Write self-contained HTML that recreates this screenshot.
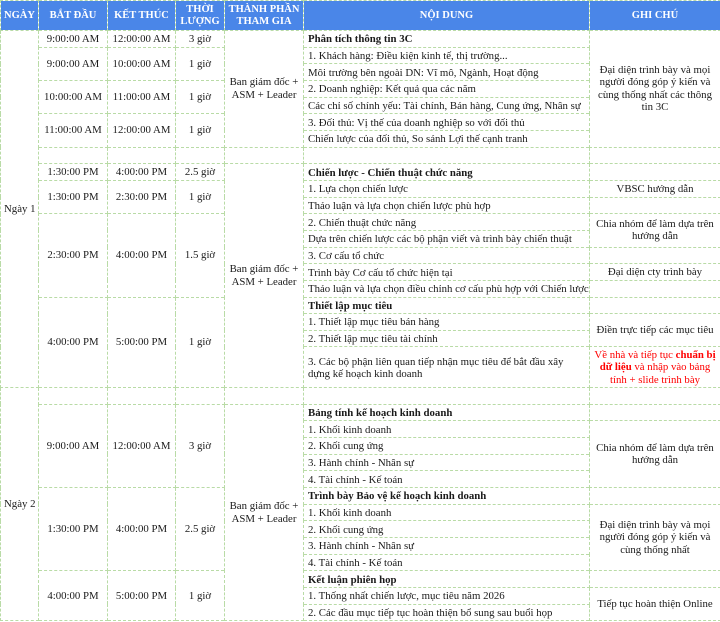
<!DOCTYPE html>
<html><head><meta charset="utf-8"><style>
html,body{margin:0;padding:0;background:#fff;overflow:hidden;}
table{border-collapse:collapse;table-layout:fixed;width:720px;font-family:"Liberation Serif","DejaVu Serif",serif;font-size:10.8px;color:#1a1a1a;}
td,th{border:1px dashed #b9dba6;padding:0 3px;overflow:hidden;white-space:nowrap;text-align:center;vertical-align:middle;line-height:12px;}
th{background:#4a86e8;color:#fff;font-weight:bold;font-size:10.5px;height:29px;line-height:12px;padding:0 1px;}
tr{height:16.67px;}
td.c{text-align:left;padding-left:4px;padding-top:1px;}
td.n{white-space:normal;line-height:12.5px;padding:0 5px;}
td.w{white-space:normal;line-height:13px;}
b{font-weight:bold;}
.red{color:#ff0000;}
</style></head><body>
<table>
<colgroup><col style="width:38px"><col style="width:69px"><col style="width:68px"><col style="width:49px"><col style="width:79px"><col style="width:286px"><col style="width:131px"></colgroup>
<tr style="height:30px"><th>NGÀY</th><th>BẮT ĐẦU</th><th>KẾT THÚC</th><th>THỜI<br>LƯỢNG</th><th>THÀNH PHẦN<br>THAM GIA</th><th>NỘI DUNG</th><th>GHI CHÚ</th></tr>
<tr><td rowspan="20">Ngày 1</td><td>9:00:00 AM</td><td>12:00:00 AM</td><td>3 giờ</td><td rowspan="7" class="w">Ban giám đốc + ASM + Leader</td><td class="c"><b>Phân tích thông tin 3C</b></td><td rowspan="7" class="n">Đại diện trình bày và mọi người đóng góp ý kiến và cùng thống nhất các thông tin 3C</td></tr>
<tr><td rowspan="2">9:00:00 AM</td><td rowspan="2">10:00:00 AM</td><td rowspan="2">1 giờ</td><td class="c">1. Khách hàng: Điều kiện kinh tế, thị trường...</td></tr>
<tr><td class="c">Môi trường bên ngoài DN: Vĩ mô, Ngành, Hoạt động</td></tr>
<tr><td rowspan="2">10:00:00 AM</td><td rowspan="2">11:00:00 AM</td><td rowspan="2">1 giờ</td><td class="c">2. Doanh nghiệp: Kết quả qua các năm</td></tr>
<tr><td class="c">Các chỉ số chính yếu: Tài chính, Bán hàng, Cung ứng, Nhân sự</td></tr>
<tr><td rowspan="2">11:00:00 AM</td><td rowspan="2">12:00:00 AM</td><td rowspan="2">1 giờ</td><td class="c">3. Đối thủ: Vị thế của doanh nghiệp so với đối thủ</td></tr>
<tr><td class="c">Chiến lược của đối thủ, So sánh Lợi thế cạnh tranh</td></tr>
<tr><td></td><td></td><td></td><td></td><td></td><td></td></tr>
<tr><td>1:30:00 PM</td><td>4:00:00 PM</td><td>2.5 giờ</td><td rowspan="12" class="w">Ban giám đốc + ASM + Leader</td><td class="c"><b>Chiến lược - Chiến thuật chức năng</b></td><td></td></tr>
<tr><td rowspan="2">1:30:00 PM</td><td rowspan="2">2:30:00 PM</td><td rowspan="2">1 giờ</td><td class="c">1. Lựa chọn chiến lược</td><td>VBSC hướng dẫn</td></tr>
<tr><td class="c">Thảo luận và lựa chọn chiến lược phù hợp</td><td></td></tr>
<tr><td rowspan="5">2:30:00 PM</td><td rowspan="5">4:00:00 PM</td><td rowspan="5">1.5 giờ</td><td class="c">2. Chiến thuật chức năng</td><td rowspan="2" class="n">Chia nhóm để làm dựa trên hướng dẫn</td></tr>
<tr><td class="c">Dựa trên chiến lược các bộ phận viết và trình bày chiến thuật</td></tr>
<tr><td class="c">3. Cơ cấu tổ chức</td><td></td></tr>
<tr><td class="c">Trình bày Cơ cấu tổ chức hiện tại</td><td>Đại diện cty trình bày</td></tr>
<tr><td class="c">Thảo luận và lựa chọn điều chỉnh cơ cấu phù hợp với Chiến lược</td><td></td></tr>
<tr><td rowspan="4">4:00:00 PM</td><td rowspan="4">5:00:00 PM</td><td rowspan="4">1 giờ</td><td class="c"><b>Thiết lập mục tiêu</b></td><td></td></tr>
<tr><td class="c">1. Thiết lập mục tiêu bán hàng</td><td rowspan="2">Điền trực tiếp các mục tiêu</td></tr>
<tr><td class="c">2. Thiết lập mục tiêu tài chính</td></tr>
<tr style="height:40.67px"><td class="c" style="white-space:normal">3. Các bộ phận liên quan tiếp nhận mục tiêu để bắt đầu xây dựng kế hoạch kinh doanh</td><td class="n red" style="padding:0 2px">Về nhà và tiếp tục <b>chuẩn bị dữ liệu</b> và nhập vào bảng tính + slide trình bày</td></tr>
<tr><td rowspan="14">Ngày 2</td><td></td><td></td><td></td><td></td><td></td><td></td></tr>
<tr><td rowspan="5">9:00:00 AM</td><td rowspan="5">12:00:00 AM</td><td rowspan="5">3 giờ</td><td rowspan="13" class="w">Ban giám đốc + ASM + Leader</td><td class="c"><b>Bảng tính kế hoạch kinh doanh</b></td><td></td></tr>
<tr><td class="c">1. Khối kinh doanh</td><td rowspan="4" class="n">Chia nhóm để làm dựa trên hướng dẫn</td></tr>
<tr><td class="c">2. Khối cung ứng</td></tr>
<tr><td class="c">3. Hành chính - Nhân sự</td></tr>
<tr><td class="c">4. Tài chính - Kế toán</td></tr>
<tr><td rowspan="5">1:30:00 PM</td><td rowspan="5">4:00:00 PM</td><td rowspan="5">2.5 giờ</td><td class="c"><b>Trình bày Bảo vệ kế hoạch kinh doanh</b></td><td></td></tr>
<tr><td class="c">1. Khối kinh doanh</td><td rowspan="4" class="n">Đại diện trình bày và mọi người đóng góp ý kiến và cùng thống nhất</td></tr>
<tr><td class="c">2. Khối cung ứng</td></tr>
<tr><td class="c">3. Hành chính - Nhân sự</td></tr>
<tr><td class="c">4. Tài chính - Kế toán</td></tr>
<tr><td rowspan="3">4:00:00 PM</td><td rowspan="3">5:00:00 PM</td><td rowspan="3">1 giờ</td><td class="c"><b>Kết luận phiên họp</b></td><td></td></tr>
<tr><td class="c">1. Thống nhất chiến lược, mục tiêu năm 2026</td><td rowspan="2">Tiếp tục hoàn thiện Online</td></tr>
<tr><td class="c">2. Các đầu mục tiếp tục hoàn thiện bổ sung sau buổi họp</td></tr>
</table>
</body></html>
